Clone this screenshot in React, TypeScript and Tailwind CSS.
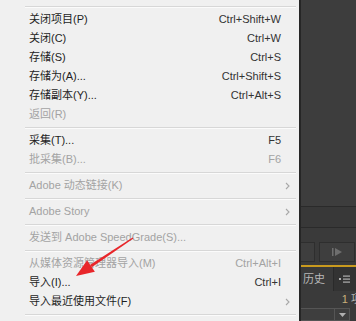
import React from "react";

type Item =
  | { sep: true }
  | { label: string; shortcut?: string; disabled?: boolean; sub?: boolean; sep?: false };

const items: Item[] = [
  { sep: true },
  { label: "关闭项目(P)", shortcut: "Ctrl+Shift+W" },
  { label: "关闭(C)", shortcut: "Ctrl+W" },
  { label: "存储(S)", shortcut: "Ctrl+S" },
  { label: "存储为(A)...", shortcut: "Ctrl+Shift+S" },
  { label: "存储副本(Y)...", shortcut: "Ctrl+Alt+S" },
  { label: "返回(R)", disabled: true },
  { sep: true },
  { label: "采集(T)...", shortcut: "F5" },
  { label: "批采集(B)...", shortcut: "F6", disabled: true },
  { sep: true },
  { label: "Adobe 动态链接(K)", disabled: true, sub: true },
  { sep: true },
  { label: "Adobe Story", disabled: true, sub: true },
  { sep: true },
  { label: "发送到 Adobe SpeedGrade(S)...", disabled: true },
  { sep: true },
  { label: "从媒体资源管理器导入(M)", shortcut: "Ctrl+Alt+I", disabled: true },
  { label: "导入(I)...", shortcut: "Ctrl+I" },
  { label: "导入最近使用文件(F)", sub: true },
  { sep: true },
  { label: "导出(E)", sub: true },
];

function Chevron() {
  return (
    <svg width="5" height="8" viewBox="0 0 5 8" className="block">
      <path d="M1 1 L4 4 L1 7" fill="none" stroke="#a8a8a8" strokeWidth="1.1" />
    </svg>
  );
}

export default function App() {
  return (
    <div
      className="relative flex w-[356px] h-[321px] overflow-hidden bg-[#f0f0f0] text-[11px] leading-none"
      style={{ fontFamily: '"Liberation Sans", "Noto Sans CJK SC", sans-serif' }}
    >
      {/* Menu */}
      <div className="flex w-[299px] shrink-0 flex-col pt-[3px] pl-[25px] pr-[3px]">
        {items.map((it, i) =>
          it.sep ? (
            <div key={i} className="flex h-[7px] shrink-0 flex-col justify-center">
              <div className="h-px bg-[#d7d7d7]" />
              <div className="h-px bg-[#fbfbfb]" />
            </div>
          ) : (
            <div
              key={i}
              className={`flex h-[19px] shrink-0 items-center pl-[4px] ${
                it.disabled ? "text-[#a3a3a3]" : "text-[#1e1e1e]"
              }`}
            >
              <span className="flex-1 whitespace-nowrap">{it.label}</span>
              {it.shortcut && (
                <span className={`mr-[15px] whitespace-nowrap ${it.disabled ? "text-[#a3a3a3]" : "text-[#333333]"}`}>
                  {it.shortcut}
                </span>
              )}
              {it.sub && (
                <span className="mr-[6px]">
                  <Chevron />
                </span>
              )}
            </div>
          )
        )}
      </div>

      {/* Dark panel */}
      <div className="flex flex-1 flex-col border-l-2 border-[#262626] bg-[#3c3c3c]">
        <div className="h-[206px] shrink-0 bg-[#3d3d3d]" />
        <div className="h-px shrink-0 bg-[#2a2a2a]" />
        <div className="h-[20px] shrink-0 bg-[#383838]" />
        <div className="h-px shrink-0 bg-[#2a2a2a]" />
        <div className="flex h-[37px] shrink-0 items-end gap-[4px] bg-[#3a3a3a] pb-[3px]">
          <div className="h-[20px] w-[14px] border border-l-0 border-[#2e2e2e] bg-[#3e3e3e]" />
          <div className="flex h-[20px] w-[36px] items-center justify-center border border-[#2e2e2e] bg-[#3e3e3e]">
            <svg width="12" height="10" viewBox="0 0 12 10">
              <rect x="1" y="1" width="1.5" height="8" fill="#6e6e6e" />
              <path d="M4 1 L11 5 L4 9 Z" fill="#6e6e6e" />
            </svg>
          </div>
        </div>
        <div className="h-[2px] shrink-0 bg-[#c99a1e]" />
        <div className="flex h-[24px] shrink-0 items-center bg-[#333333]">
          <div className="flex h-full w-[32px] items-center bg-[#3a3a3a] pl-[2px] text-[#b8b8b8]">历史</div>
          <div className="h-full w-px bg-[#2a2a2a]" />
          <div className="flex flex-1 items-center justify-center">
            <svg width="12" height="8" viewBox="0 0 12 8">
              <rect x="0" y="3" width="2" height="2" fill="#b0b0b0" />
              <rect x="4" y="0.5" width="7" height="1.2" fill="#b0b0b0" />
              <rect x="4" y="3.5" width="7" height="1.2" fill="#b0b0b0" />
              <rect x="4" y="6.5" width="7" height="1.2" fill="#b0b0b0" />
            </svg>
          </div>
        </div>
        <div className="flex h-[16px] shrink-0 items-center justify-end bg-[#3a3a3a] text-[#c9b07a] whitespace-nowrap">
          <span className="mr-[-6px]">
            1 <span className="text-[#b8b8b8]">项</span>
          </span>
        </div>
        <div className="flex h-[14px] shrink-0 items-end bg-[#3a3a3a]">
          <div className="flex h-[13px] w-[49px] items-center justify-end border border-l-0 border-[#555555] bg-[#3e3e3e]">
            <div className="h-full w-px bg-[#555555]" />
            <div className="flex w-[14px] items-center justify-center">
              <svg width="7" height="4" viewBox="0 0 7 4">
                <path d="M0 0 L7 0 L3.5 4 Z" fill="#b0b0b0" />
              </svg>
            </div>
          </div>
        </div>
      </div>

      {/* Red annotation arrow */}
      <svg className="pointer-events-none absolute left-0 top-0" width="356" height="321" viewBox="0 0 356 321">
        <polygon points="133.4,238.6 132.6,237.4 90.2,264.8 91.8,267.2" fill="#e8262a" />
        <polygon points="76,276 87.1,260.2 94.9,271.8" fill="#e8262a" />
      </svg>
    </div>
  );
}
